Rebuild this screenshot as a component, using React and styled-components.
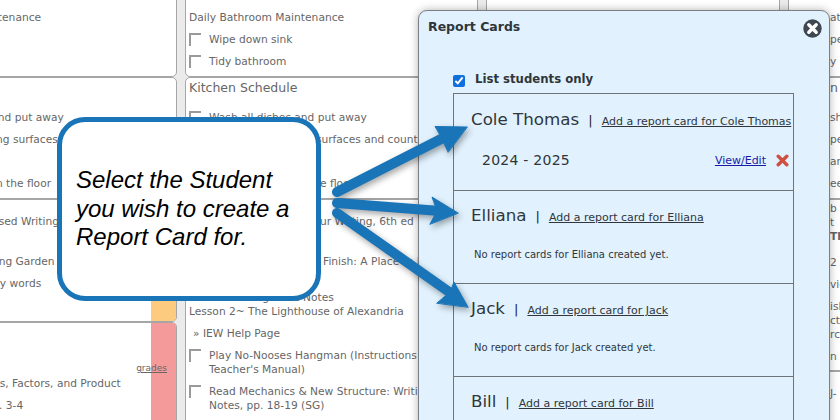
import React from "react";
import styled, { createGlobalStyle } from "styled-components";

const Global = createGlobalStyle`
  html, body { margin: 0; padding: 0; height: 420px; overflow: hidden; background: #fff; }
  #root { width: 840px; height: 420px; overflow: hidden; position: relative; }
`;

const Page = styled.div`
  position: relative;
  width: 840px;
  height: 420px;
  overflow: hidden;
  background: #ebebeb;
  font-family: "DejaVu Sans", Verdana, sans-serif;
`;
const Columns = styled.div`
  display: flex;
  gap: 8px;
  margin: -20px 0 0 -118px;
  width: 1300px;
`;
const Column = styled.div`
  width: ${(p) => p.$w}px;
  flex: none;
  display: flex;
  flex-direction: column;
`;
const Cell = styled.div`
  position: relative;
  box-sizing: border-box;
  height: ${(p) => p.$h}px;
  display: flex;
  background: #fff;
  border: 1px solid #a6a6a6;
  border-radius: 5px;
  overflow: hidden;
`;
const CellBody = styled.div`
  flex: 1;
  min-width: 0;
  box-sizing: border-box;
  padding: ${(p) => p.$top}px 0 0 ${(p) => p.$left ?? 3}px;
  white-space: nowrap;
`;
const Strip = styled.div`
  flex: none;
  width: 25px;
  background: ${(p) => p.$color};
`;
const Title = styled.div`
  font-size: ${(p) => p.$size ?? 10.7}px;
  line-height: 14px;
  color: #666;
  margin-bottom: ${(p) => p.$mb ?? 8}px;
`;
const Line = styled.div`
  font-size: 10.65px;
  line-height: 14px;
  color: #666;
  font-weight: ${(p) => (p.$bold ? 700 : 400)};
  margin-top: ${(p) => p.$mt ?? 0}px;
  padding-left: ${(p) => p.$indent ?? 0}px;
`;
const Task = styled.div`
  display: flex;
  gap: 8px;
  margin-top: ${(p) => p.$mt ?? 0}px;
  margin-bottom: 8px;
  font-size: 10.65px;
  line-height: 14px;
  color: #666;
`;
const Box = styled.span`
  flex: none;
  box-sizing: border-box;
  width: 12px;
  height: 13px;
  border-top: 2px solid #9a9a9a;
  border-left: 2px solid #9a9a9a;
`;
const Grades = styled.a`
  position: absolute;
  right: 9px;
  top: 39px;
  font-size: 9px;
  line-height: 12px;
  color: #666;
  text-decoration: underline;
`;

const Modal = styled.section`
  position: absolute;
  z-index: 1;
  left: 418px;
  top: 10px;
  width: 412px;
  height: 440px;
  box-sizing: border-box;
  padding: 9px 0 0 9px;
  background: #e1f2fe;
  border: 1px solid #7a7f85;
  border-radius: 9px;
  box-shadow: 0 0 8px rgba(0, 0, 0, 0.3);
  color: #2f353b;
`;
const ModalHead = styled.header`
  position: relative;
  height: 38px;
  font-size: 12.5px;
  font-weight: 700;
  line-height: 14px;
`;
const Close = styled.svg`
  position: absolute;
  left: 375px;
  top: -1px;
`;
const OnlyRow = styled.label`
  display: flex;
  align-items: center;
  gap: 10px;
  margin: 0 0 0 25px;
  padding-top: 13px;
  height: 16px;
  font-size: 11.7px;
  font-weight: 700;
`;
const Check = styled.input`
  margin: 4px 0 0 0;
  width: 12px;
  height: 12px;
  accent-color: #0f6fdc;
`;
const Students = styled.div`
  margin: 6px 0 0 25px;
  width: 341px;
  box-sizing: border-box;
  border: 1px solid #6e747a;
  border-bottom: 0;
`;
const StudentRow = styled.article`
  box-sizing: border-box;
  height: ${(p) => p.$h}px;
  padding: ${(p) => p.$top ?? 12}px 0 0 17px;
  border-bottom: 1px solid #6e747a;
  &:last-child { border-bottom: 0; }
`;
const NameLine = styled.div`
  display: flex;
  align-items: baseline;
  white-space: nowrap;
  line-height: 24px;
`;
const Name = styled.span`
  font-size: 16.7px;
  color: #30363c;
`;
const Sep = styled.span`
  font-size: 13px;
  margin: 0 9px 0 9px;
  color: #222;
`;
const AddLink = styled.a`
  font-size: 11px;
  color: #30363c;
  text-decoration: underline;
`;
const YearRow = styled.div`
  display: flex;
  align-items: center;
  margin: 17px 4px 0 11px;
`;
const Year = styled.span`
  flex: 1;
  font-size: 14px;
  line-height: 18px;
  letter-spacing: 0.25px;
`;
const ViewLink = styled.a`
  font-size: 11px;
  color: #1a1aa8;
  text-decoration: underline;
  margin-right: 10px;
`;
const Note = styled.p`
  margin: 18px 0 0 3px;
  font-size: 10px;
  line-height: 14px;
  color: #30363c;
`;

const Callout = styled.aside`
  position: absolute;
  z-index: 2;
  left: 57px;
  top: 117px;
  width: 264px;
  height: 184px;
  box-sizing: border-box;
  display: flex;
  align-items: center;
  padding: 0 14px;
  background: #fff;
  border: 5.5px solid #1a75b8;
  border-radius: 28px;
  font: italic 24px/28.5px "Liberation Sans", Arial, sans-serif;
  color: #000;
`;
const Arrows = styled.svg`
  position: absolute;
  z-index: 3;
  left: 0;
  top: 0;
  pointer-events: none;
  filter: drop-shadow(2px 3px 3px rgba(0, 0, 0, 0.35));
`;

const students = [{ name: "Bill", h: 60, top: 12 }];

export default function App() {
  return (
    <Page>
      <Global />
      <Columns>
        <Column $w={295}>
          <Cell $h={97}>
            <CellBody $top={30}>
              <Title>Daily Bathroom Maintenance</Title>
            </CellBody>
          </Cell>
          <Cell $h={122}>
            <CellBody $top={3}>
              <Title $size={12.5} $mb={16}>Kitchen Schedule</Title>
              <Task><Box />Wash all dishes and put away</Task>
              <Task><Box />Wipe down cooking surfaces and counters</Task>
              <Task><Box />Empty the trash</Task>
              <Task><Box />Sweep and wax in the floor</Task>
            </CellBody>
          </Cell>
          <Cell $h={123}>
            <CellBody $top={15}>
              <Line>Myths and Theme-Based Writing</Line>
              <Task $mt={26}><Box />Plantings a Growing Garden</Task>
              <Task><Box />Review vocabulary words</Task>
            </CellBody>
            <Strip $color="#fccb80" />
          </Cell>
          <Cell $h={120}>
            <CellBody $top={54}>
              <Task><Box />Practices Multiples, Factors, and Product</Task>
              <Task><Box />Use Workbook pp. 3-4</Task>
            </CellBody>
            <Strip $color="#f59a9a" />
            <Grades>grades</Grades>
          </Cell>
        </Column>
        <Column $w={293}>
          <Cell $h={97}>
            <CellBody $top={30}>
              <Title>Daily Bathroom Maintenance</Title>
              <Task><Box />Wipe down sink</Task>
              <Task><Box />Tidy bathroom</Task>
            </CellBody>
          </Cell>
          <Cell $h={122}>
            <CellBody $top={3}>
              <Title $size={12.5} $mb={16}>Kitchen Schedule</Title>
              <Task><Box />Wash all dishes and put away</Task>
              <Task><Box />Wipe down cooking surfaces and counters</Task>
              <Task><Box />Empty the trash</Task>
              <Task><Box />Sweep and wax in the floor</Task>
            </CellBody>
          </Cell>
          <Cell $h={245}>
            <CellBody $top={15}>
              <Line>Structure and Style in Your Writing, 6th ed</Line>
              <Line $mt={26}>Lessons 12 from Start to Finish: A Place to Begin</Line>
              <Line $mt={22}>Read Following Word Notes</Line>
              <Line>Lesson 2~ The Lighthouse of Alexandria</Line>
              <Line $mt={8} $indent={4}>» IEW Help Page</Line>
              <Task $mt={8}>
                <Box />
                <span>Play No-Nooses Hangman (Instructions in<br />Teacher's Manual)</span>
              </Task>
              <Task>
                <Box />
                <span>Read Mechanics &amp; New Structure: Writing<br />Notes, pp. 18-19 (SG)</span>
              </Task>
            </CellBody>
          </Cell>
        </Column>
        <Column $w={294}>
          <Cell $h={97} />
          <Cell $h={122} />
          <Cell $h={245} />
        </Column>
        <Column $w={200}>
          <Cell $h={97}>
            <CellBody $top={30} $left={41}>
              <Line>at</Line>
              <Line $mt={8}>pe</Line>
              <Line $mt={8}>y</Line>
            </CellBody>
          </Cell>
          <Cell $h={122}>
            <CellBody $top={3} $left={41}>
              <Title $size={12.5} $mb={16}>n</Title>
              <Line>sh</Line>
              <Line $mt={8}>pe</Line>
              <Line $mt={8}>ar</Line>
              <Line $mt={8}>ee</Line>
            </CellBody>
          </Cell>
          <Cell $h={172}>
            <CellBody $top={2} $left={41}>
              <Line>b</Line>
              <Line>t</Line>
              <Line $bold>Th</Line>
              <Line $mt={12}>2</Line>
              <Line $mt={8}>vie</Line>
              <Line $mt={8}>ish</Line>
              <Line>ct</Line>
              <Line>rc</Line>
              <Line $mt={8}>n</Line>
            </CellBody>
          </Cell>
          <Cell $h={60}>
            <CellBody $top={15} $left={41}>
              <Line>J-</Line>
            </CellBody>
          </Cell>
        </Column>
      </Columns>

      <Modal>
        <ModalHead>
          Report Cards
          <Close width="19" height="19" viewBox="0 0 19 19" aria-hidden="true">
            <circle cx="9.5" cy="9.5" r="9.2" fill="#3f4850" />
            <path d="M5.8 5.8L13.2 13.2M13.2 5.8L5.8 13.2" stroke="#fff" strokeWidth="3.4" strokeLinecap="round" />
          </Close>
        </ModalHead>
        <OnlyRow>
          <Check type="checkbox" defaultChecked />
          List students only
        </OnlyRow>
        <Students>
          <StudentRow $h={97} $top={13}>
            <NameLine>
              <Name>Cole Thomas</Name>
              <Sep>|</Sep>
              <AddLink>Add a report card for Cole Thomas</AddLink>
            </NameLine>
            <YearRow>
              <Year>2024 - 2025</Year>
              <ViewLink>View/Edit</ViewLink>
              <svg width="13" height="13" viewBox="0 0 13 13" aria-hidden="true">
                <path d="M2.2 2.2L10.8 10.8M10.8 2.2L2.2 10.8" stroke="#cf4f41" strokeWidth="3.4" strokeLinecap="round" />
              </svg>
            </YearRow>
          </StudentRow>
          <StudentRow $h={93}>
            <NameLine>
              <Name>Elliana</Name>
              <Sep>|</Sep>
              <AddLink>Add a report card for Elliana</AddLink>
            </NameLine>
            <Note>No report cards for Elliana created yet.</Note>
          </StudentRow>
          <StudentRow $h={93}>
            <NameLine>
              <Name>Jack</Name>
              <Sep>|</Sep>
              <AddLink>Add a report card for Jack</AddLink>
            </NameLine>
            <Note>No report cards for Jack created yet.</Note>
          </StudentRow>
          {students.map((s) => (
            <StudentRow key={s.name} $h={s.h} $top={s.top}>
              <NameLine>
                <Name>{s.name}</Name>
                <Sep>|</Sep>
                <AddLink>Add a report card for {s.name}</AddLink>
              </NameLine>
            </StudentRow>
          ))}
        </Students>
      </Modal>

      <Callout>
        <span>Select the Student<br />you wish to create a<br />Report Card for.</span>
      </Callout>

      <Arrows width="840" height="420" viewBox="0 0 840 420" aria-hidden="true">
        <g fill="#1a75b8" stroke="#1a75b8" strokeLinecap="round" strokeLinejoin="round">
          <path d="M337 192L445 137" strokeWidth="10" fill="none" />
          <path d="M467 127L435 126.5L440 135L448 152Z" strokeWidth="1" />
          <path d="M337 203L440 211" strokeWidth="10" fill="none" />
          <path d="M458 213L432 197L437 211L430 224Z" strokeWidth="1" />
          <path d="M337 213L452 294" strokeWidth="10" fill="none" />
          <path d="M468 307L454 282L450 292L437 303Z" strokeWidth="1" />
        </g>
      </Arrows>
    </Page>
  );
}
